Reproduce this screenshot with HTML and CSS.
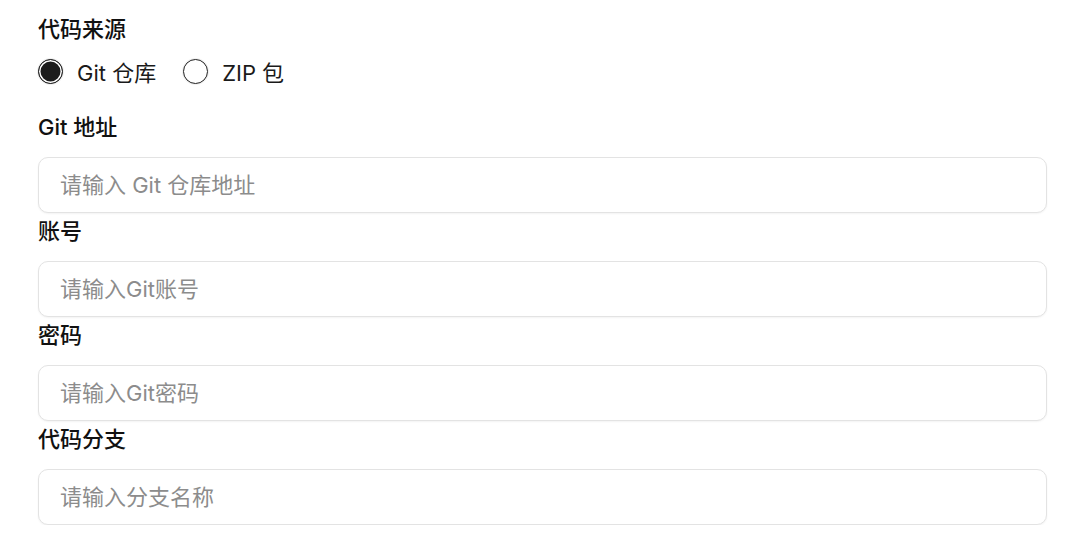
FILE: index.html
```html
<!DOCTYPE html>
<html lang="zh-CN">
<head>
    <meta charset="UTF-8">
    <meta name="viewport" content="width=device-width, initial-scale=1.0">
    <title>代码来源</title>
    <link rel="stylesheet" href="styles.css">
</head>
<body>
    <form class="source-form">
        <div class="label">代码来源</div>
        <div class="radio-group">
            <label class="radio-item">
                <span class="radio checked"></span>
                <span>Git 仓库</span>
            </label>
            <label class="radio-item">
                <span class="radio"></span>
                <span>ZIP 包</span>
            </label>
        </div>

        <div class="field first">
            <div class="label">Git 地址</div>
            <input class="text-input" type="text" placeholder="请输入 Git 仓库地址">
        </div>
        <div class="field">
            <div class="label">账号</div>
            <input class="text-input" type="text" placeholder="请输入Git账号">
        </div>
        <div class="field">
            <div class="label">密码</div>
            <input class="text-input" type="password" placeholder="请输入Git密码">
        </div>
        <div class="field">
            <div class="label">代码分支</div>
            <input class="text-input" type="text" placeholder="请输入分支名称">
        </div>
    </form>
</body>
</html>
```

FILE: styles.css
```css
body {
    margin: 0;
    padding: 0;
    background-color: #fff;
    color: #1a1a1a;
    font-family: Inter, "Noto Sans CJK SC", sans-serif;
    font-size: 22px;
}
.source-form {
    padding: 14px 33px 0 38px;
}
.label {
    line-height: 30px;
    font-weight: 500;
    color: #111;
}
.radio-group {
    display: flex;
    align-items: center;
    gap: 27px;
    margin-top: 12px;
    height: 30px;
}
.radio-item {
    display: flex;
    align-items: center;
    gap: 14px;
    cursor: pointer;
    color: #1a1a1a;
}
.radio {
    width: 25px;
    height: 25px;
    box-sizing: border-box;
    border: 1.5px solid #222;
    border-radius: 50%;
    background-color: #fff;
    box-shadow: 0 0 0 1px rgba(0, 0, 0, 0.06);
}
.radio.checked {
    background-color: #1c1c1c;
    box-shadow: inset 0 0 0 1.5px #fff, 0 0 0 1px rgba(0, 0, 0, 0.06);
}
.field {
    margin-top: 3px;
}
.field.first {
    margin-top: 26px;
}
.text-input {
    display: block;
    width: 100%;
    height: 56px;
    margin-top: 15px;
    padding: 0 21px;
    box-sizing: border-box;
    border: 1px solid #e3e3e3;
    border-radius: 10px;
    background-color: #fff;
    box-shadow: 0 1px 2px rgba(0, 0, 0, 0.05);
    font-family: inherit;
    font-size: 22px;
    color: #1a1a1a;
    outline: none;
}
.text-input::placeholder {
    color: #8c8c8c;
}
```
